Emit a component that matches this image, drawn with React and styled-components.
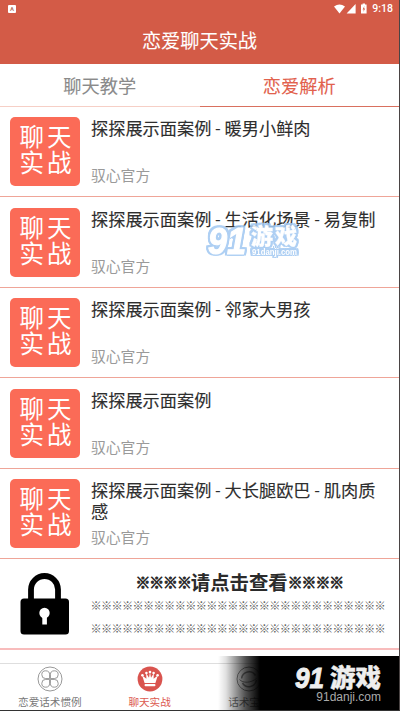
import React from 'react';
import styled, { createGlobalStyle } from 'styled-components';

const cases = [
    '探探展示面案例 - 暖男小鲜肉',
    '探探展示面案例 - 生活化场景 - 易复制',
    '探探展示面案例 - 邻家大男孩',
    '探探展示面案例',
    '探探展示面案例 - 大长腿欧巴 - 肌肉质感',
];

function StatusIcons() {
    return (
        <svg width="36" height="12" viewBox="0 0 36 12">
            <path d="M0 3.6Q5.5-.8 11 3.6L5.5 10.5Z" fill="#fff" />
            <path d="M21.6 1V10.5H12.6Z" fill="#fff" />
            <path d="M27 1.6H28.6V.6H31V1.6H32.6V10.5H27Z" fill="#fff" />
            <path d="M30.4 3L28.6 6.4H29.8L29.3 9L31.2 5.6H30Z" fill="#d35b47" />
        </svg>
    );
}

function LockIcon() {
    return (
        <svg width="49" height="63" viewBox="0 0 49 63">
            <path d="M11 28V17.5a13.5 13.5 0 0 1 27 0V28" fill="none" stroke="#000" strokeWidth="5.8" />
            <rect x="0.5" y="26.5" width="48.5" height="36" rx="3.5" fill="#000" />
            <circle cx="24.5" cy="41" r="5.2" fill="#fff" />
            <rect x="22.3" y="43" width="4.6" height="9.5" fill="#fff" />
        </svg>
    );
}

function CloverIcon() {
    return (
        <svg width="26" height="26" viewBox="0 0 26 26" fill="none" stroke="#8d8d8d" strokeWidth="0.9">
            <circle cx="13" cy="13" r="12" />
            <path d="M12.6 12.6V8.8a3.9 3.9 0 1 0-3.9 3.8ZM13.4 12.6V8.8a3.9 3.9 0 1 1 3.9 3.8ZM12.6 13.4v3.8a3.9 3.9 0 1 1-3.9-3.8ZM13.4 13.4v3.8a3.9 3.9 0 1 0 3.9-3.8Z" />
        </svg>
    );
}

function CrownIcon() {
    return (
        <svg width="26" height="26" viewBox="0 0 26 26">
            <circle cx="13" cy="13" r="12.4" fill="#d9544f" />
            <path d="M7.6 17L5.2 9.5L9.4 12.8L9.2 7.2L12 11.8L13 6L14 11.8L16.8 7.2L16.6 12.8L20.8 9.5L18.4 17Z" fill="#fff" />
            <g fill="#fff">
                <circle cx="5.4" cy="9.2" r="1.3" />
                <circle cx="9.4" cy="7" r="1.3" />
                <circle cx="13" cy="6" r="1.3" />
                <circle cx="16.6" cy="7" r="1.3" />
                <circle cx="20.6" cy="9.2" r="1.3" />
                <rect x="7.6" y="18" width="10.8" height="2.2" rx="0.8" />
            </g>
        </svg>
    );
}

function PlanetIcon() {
    return (
        <svg width="26" height="26" viewBox="0 0 26 26" fill="none" stroke="#8d8d8d" strokeWidth="1">
            <circle cx="13" cy="13" r="12" />
            <path d="M19.5 9.5A7.5 7.5 0 0 0 5.6 12.5M6.5 17A7.5 7.5 0 0 0 20.4 14" strokeWidth="1.5" />
            <path d="M3.5 13.5C7 17.5 15 17 20.5 12.5" />
        </svg>
    );
}

function BlueMark() {
    return (
        <OutlinedSvg width="100" height="42" viewBox="0 0 100 42" fill="#fff" stroke="#fff">
            <text x="5" y="33" fontFamily="'Liberation Sans', sans-serif" fontSize="37" fontWeight="700" fontStyle="italic" strokeWidth="1.2" textLength="38" lengthAdjust="spacingAndGlyphs">91</text>
            <text x="48" y="23" fontFamily="'Noto Sans CJK SC', sans-serif" fontSize="22" fontWeight="900" strokeWidth="0.3" textLength="46">游戏</text>
            <text x="49" y="34" fontFamily="'Liberation Sans', sans-serif" fontSize="8.5" fontWeight="700" strokeWidth="0" textLength="45" lengthAdjust="spacingAndGlyphs">91danji.com</text>
        </OutlinedSvg>
    );
}

function App() {
    return (
        <Screen>
            <Page />
            <Header>
                <StatusBar>
                    <AppBadge>A</AppBadge>
                    <StatusRight><StatusIcons />9:18</StatusRight>
                </StatusBar>
                <HeaderTitle>恋爱聊天实战</HeaderTitle>
            </Header>
            <Tabs>
                <Tab>聊天教学</Tab>
                <Tab $active>恋爱解析</Tab>
            </Tabs>
            <List>
                {cases.map((title) => (
                    <Row key={title}>
                        <Thumb><span>聊天</span><span>实战</span></Thumb>
                        <RowText>
                            <RowTitle>{title}</RowTitle>
                            <Author>驭心官方</Author>
                        </RowText>
                    </Row>
                ))}
                <LockedRow>
                    <LockIcon />
                    <LockedText>
                        <LockedTitle><Marks>※※※※</Marks>请点击查看<Marks>※※※※</Marks></LockedTitle>
                        <Masked>{'※'.repeat(28)}</Masked>
                        <Masked>{'※'.repeat(28)}</Masked>
                    </LockedText>
                </LockedRow>
            </List>
            <BottomNav>
                <NavItem><CloverIcon />恋爱话术惯例</NavItem>
                <NavItem $active><CrownIcon />聊天实战</NavItem>
                <NavItem><PlanetIcon />话术宝典</NavItem>
                <NavItem />
            </BottomNav>
            <FloatingMark><BlueMark /></FloatingMark>
            <CornerMark>
                <svg width="88" height="26" viewBox="0 0 88 26" fill="#eee" stroke="#eee">
                    <text x="1" y="23.5" fontFamily="'Liberation Sans', sans-serif" fontSize="30" fontWeight="700" fontStyle="italic" strokeWidth="1" textLength="29" lengthAdjust="spacingAndGlyphs">91</text>
                    <text x="36" y="22.5" fontFamily="'Noto Sans CJK SC', sans-serif" fontSize="25" fontWeight="900" strokeWidth="0.4" textLength="51" lengthAdjust="spacingAndGlyphs">游戏</text>
                </svg>
                <SiteName>91danji.com</SiteName>
            </CornerMark>
        </Screen>
    );
}

const Page = createGlobalStyle`
    * {
        box-sizing: border-box;
    }
    body {
        margin: 0;
        overflow: hidden;
    }
`;
const Screen = styled.div`
    position: relative;
    display: flex;
    flex-direction: column;
    width: 400px;
    height: 711px;
    overflow: hidden;
    background: #fff;
    border-right: 1px solid #4a4444;
    border-bottom: 1px solid #333;
    font-family: Roboto, 'Noto Sans CJK SC', sans-serif;
`;
const Header = styled.header`
    height: 64px;
    flex: none;
    background: #d35b47;
    color: #fff;
`;
const StatusBar = styled.div`
    display: flex;
    justify-content: space-between;
    align-items: center;
    height: 17px;
    padding: 0 6px 0 8px;
`;
const AppBadge = styled.span`
    width: 8px;
    height: 8px;
    border-radius: 1px;
    background: #fff;
    color: #b9796c;
    font-size: 6px;
    font-weight: 700;
    line-height: 8px;
    text-align: center;
`;
const StatusRight = styled.div`
    display: flex;
    align-items: center;
    gap: 2px;
    font-size: 10.5px;
    font-weight: 500;
`;
const HeaderTitle = styled.h1`
    margin: 0;
    font-size: 19.2px;
    font-weight: 400;
    line-height: 49px;
    text-align: center;
    -webkit-text-stroke: 0.1px;
`;
const Tabs = styled.div`
    display: flex;
    height: 42.5px;
    flex: none;
`;
const Tab = styled.div`
    flex: 1;
    padding-top: 1px;
    font-size: 18.2px;
    line-height: 43px;
    text-align: center;
    color: ${(props) => (props.$active ? '#e2614d' : '#8a8a8a')};
    border-bottom: ${(props) => (props.$active ? '1.5px solid #d9705f' : '1px solid #f6cfc6')};
    -webkit-text-stroke: 0.1px;
`;
const List = styled.div`
    height: 556.5px;
    flex: none;
`;
const Row = styled.div`
    display: flex;
    height: 90.5px;
    padding: 10.5px 10px 0;
    border-bottom: 1px solid #efa598;
`;
const Thumb = styled.div`
    display: flex;
    flex-direction: column;
    align-items: center;
    width: 70px;
    height: 69px;
    padding: 8px 0 0 4px;
    flex: none;
    border-radius: 5px;
    background: #fb6b57;
    color: #fff;
    font-size: 24.5px;
    line-height: 26px;
    letter-spacing: 3px;
`;
const RowText = styled.div`
    display: flex;
    flex-direction: column;
    justify-content: space-between;
    flex: 1;
    height: 69px;
    padding: 2px 0 0 11px;
`;
const RowTitle = styled.div`
    font-size: 17.2px;
    line-height: 20.5px;
    color: #2e2e2e;
    -webkit-text-stroke: 0.12px;
`;
const Author = styled.div`
    font-size: 14.8px;
    line-height: 20px;
    color: #9a9a9a;
`;
const LockedRow = styled.div`
    display: flex;
    align-items: center;
    height: 90.5px;
    padding: 0 14px 0 20px;
    border-bottom: 2px solid #f8bcbc;
`;
const LockedText = styled.div`
    padding: 2px 0 0 21.5px;
`;
const LockedTitle = styled.div`
    display: flex;
    justify-content: center;
    align-items: center;
    height: 28px;
    padding-left: 3px;
    font-size: 19.4px;
    font-weight: 700;
    color: #2b2b2b;
`;
const Marks = styled.span`
    font-size: 14.8px;
    letter-spacing: -0.95px;
    -webkit-text-stroke: 0.8px;
`;
const Masked = styled.div`
    font-size: 11.2px;
    letter-spacing: -0.67px;
    line-height: 23px;
    white-space: nowrap;
    color: #606060;
`;
const BottomNav = styled.nav`
    display: flex;
    flex: 1;
    border-top: 1px solid #dedede;
`;
const NavItem = styled.div`
    display: flex;
    flex-direction: column;
    align-items: center;
    width: 100px;
    padding-top: 2px;
    font-size: 10.6px;
    line-height: 18px;
    color: ${(props) => (props.$active ? '#dc5a50' : '#777')};
    svg {
        margin-bottom: 2px;
    }
`;
const FloatingMark = styled.div`
    position: absolute;
    top: 221px;
    left: 203px;
    opacity: 0.88;
`;
const OutlinedSvg = styled.svg`
    display: block;
    filter: drop-shadow(2px 0 0 #a3c9f2) drop-shadow(-2px 0 0 #a3c9f2) drop-shadow(0 1.6px 0 #a3c9f2) drop-shadow(0 -1.6px 0 #a3c9f2);
`;
const CornerMark = styled.div`
    position: absolute;
    right: -1px;
    bottom: 0;
    display: flex;
    flex-direction: column;
    align-items: flex-end;
    width: 182px;
    height: 54px;
    padding: 8px 18px 0 0;
    background: linear-gradient(to right, transparent, rgba(0, 0, 0, 0.12) 8px, rgba(0, 0, 0, 0.7) 28px, #000 42px);
`;
const SiteName = styled.div`
    padding-right: 1px;
    font-family: 'Liberation Sans', sans-serif;
    font-size: 12px;
    line-height: 15px;
    color: #aaa;
`;

export default App;
